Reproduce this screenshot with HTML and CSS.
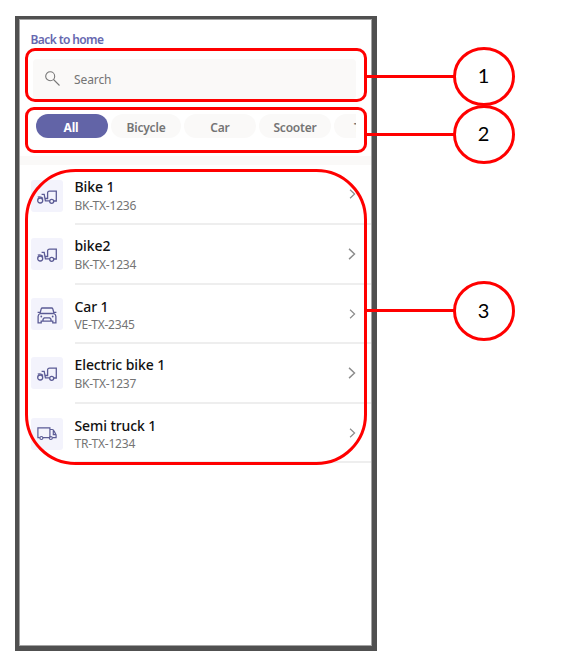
FILE: index.html
```html
<!DOCTYPE html>
<html lang="en">
<head>
<meta charset="utf-8">
<title>Vehicles</title>
<link rel="stylesheet" href="styles.css">
</head>
<body>
<svg class="defs" aria-hidden="true">
  <symbol id="scooter" viewBox="0 0 20 14"><g fill="none" stroke="#5b5b95" stroke-width="1.3"><circle cx="3.2" cy="10.5" r="2.5"/><path d="M.8 7.2Q3.8 6 6 8.5M4.600 4.400h2.600l1.200 6.500h4.200M7.500 8.500h3.100V3.100q0-2 2-2h6.700v9.900h-2.300"/><circle cx="14.700" cy="11.300" r="2"/></g></symbol>
  <symbol id="car" viewBox="0 0 20 17"><g fill="none" stroke="#5b5b95" stroke-width="1.3"><path d="M3 6.300l1.200-4.400q.3-.9 1.200-.9h9.200q.9 0 1.200.9L17 6.300M.6 5.300h2.200M17.200 5.300h2.200M3 6.500h14q1.900 1 1.900 3v6.300h-3.100v-1.600H4.200v1.600H1.100V9.500q0-2 1.900-3zM6 14v-1.700l1.200-1.500h5.600l1.200 1.500V14"/></g><g fill="#5b5b95"><circle cx="4.300" cy="9.500" r=".9"/><circle cx="15.700" cy="9.500" r=".9"/></g></symbol>
  <symbol id="truck" viewBox="0 0 20 14"><g fill="none" stroke="#5b5b95" stroke-width="1.2"><path d="M2.800 10.700H.9V.8h12v9.900H6M12.900 2.500h2.400q1.200 0 1.800 1.400l2 4v2.800h-3.700M16.300 3v4.700h2.700"/><circle cx="4.400" cy="11" r="1.500"/><circle cx="13.800" cy="11" r="1.500"/></g></symbol>
  <symbol id="chevron" viewBox="0 0 7 11"><path d="M.8.8l5 4.700-5 4.700" fill="none" stroke="#8c8c8c" stroke-width="1.300"/></symbol>
</svg>
<main class="phone">
  <div class="screen">
    <header class="top">
      <a class="back">Back to home</a>
      <div class="search">
        <svg class="glass" viewBox="0 0 15 15" fill="none" stroke="#777" stroke-width="1.1"><circle cx="5.2" cy="5.2" r="4.5"/><path d="M8.5 8.5l6 6"/></svg>
        <span>Search</span>
      </div>
      <nav class="chips">
        <span class="chip active">All</span><span class="chip bicycle">Bicycle</span><span class="chip">Car</span><span class="chip">Scooter</span><span class="chip last">Truck</span>
      </nav>
    </header>
    <div class="band"></div>
    <section class="list">
      <div class="row first"><div class="tile"><svg class="icon"><use href="#scooter"/></svg></div><div class="body"><div class="text"><b>Bike 1</b><span>BK-TX-1236</span></div><svg class="chev small"><use href="#chevron"/></svg></div></div>
      <div class="row"><div class="tile"><svg class="icon"><use href="#scooter"/></svg></div><div class="body"><div class="text"><b>bike2</b><span>BK-TX-1234</span></div><svg class="chev"><use href="#chevron"/></svg></div></div>
      <div class="row short car"><div class="tile"><svg class="icon tall"><use href="#car"/></svg></div><div class="body"><div class="text"><b>Car 1</b><span>VE-TX-2345</span></div><svg class="chev small"><use href="#chevron"/></svg></div></div>
      <div class="row"><div class="tile"><svg class="icon"><use href="#scooter"/></svg></div><div class="body"><div class="text"><b>Electric bike 1</b><span>BK-TX-1237</span></div><svg class="chev"><use href="#chevron"/></svg></div></div>
      <div class="row short semi"><div class="tile"><svg class="icon flat"><use href="#truck"/></svg></div><div class="body"><div class="text"><b>Semi truck 1</b><span>TR-TX-1234</span></div><svg class="chev small"><use href="#chevron"/></svg></div></div>
    </section>
  </div>
</main>
<svg class="notes" viewBox="0 0 563 660">
  <g fill="none" stroke="#f00" stroke-width="3">
    <rect x="26.5" y="49.5" width="339" height="51" rx="8.5"/>
    <rect x="26.5" y="108.5" width="339" height="43" rx="7.5"/>
    <rect x="26.5" y="170.5" width="339" height="293" rx="49"/>
    <path d="M366 76.5h88M366 134.5h88M366 310.5h88"/>
    <ellipse cx="484" cy="76.5" rx="29.5" ry="28"/>
    <ellipse cx="484" cy="134.5" rx="29.5" ry="28"/>
    <ellipse cx="484" cy="311" rx="29.5" ry="28.5"/>
  </g>
  <g class="nums" text-anchor="middle"><text x="483.5" y="83">1</text><text x="483.5" y="141">2</text><text x="483.5" y="318">3</text></g>
</svg>
</body>
</html>
```
FILE: styles.css
```css
* { box-sizing: border-box; }
body { margin: 0; padding: 16px 0 0 15px; background: #fff; height: 660px; overflow: hidden; font-family: "Noto Sans", "Open Sans", sans-serif; }
.defs { position: absolute; width: 0; height: 0; }
.phone { width: 362px; height: 635px; border: solid #505050; border-width: 3px 5px 5px 4px; }
.screen { height: 627px; border: 1px solid #a3a3a3; background: #fff; }
.top { height: 136px; padding: 11px 0 0 11px; }
.back { display: block; height: 18px; line-height: 18px; margin-left: -0.5px; font-size: 12px; font-weight: 600; letter-spacing: -0.6px; color: #6667af; }
.search { display: flex; align-items: center; width: 323px; height: 40px; margin: 10px 0 0 2px; padding-left: 12px; border-radius: 4px; background: #faf9f8; color: #747474; font-size: 12px; letter-spacing: -0.1px; }
.glass { width: 15px; height: 15px; margin: -2px 14px 0 0; }
.chips { display: flex; gap: 3px; width: 320px; margin: 15px 0 0 5px; overflow: hidden; }
.chip { flex: none; width: 72px; height: 24px; line-height: 27px; border-radius: 12px; background: #faf9f8; color: #747474; font-size: 12px; font-weight: 600; letter-spacing: -0.2px; text-align: center; }
.bicycle { width: 70px; }
.active { background: #6264a7; color: #fff; font-weight: 700; padding-right: 2px; }
.last { text-align: left; padding-left: 20px; }
.band { height: 9px; background: #faf9f8; }
.row { display: flex; height: 60px; padding: 0 0 0 11px; }
.short { height: 59px; }
.tile { display: flex; align-items: center; justify-content: center; width: 32px; height: 32px; margin: 13px 12px 0 0; border-radius: 3px; background: #f3f3fc; }
.first .tile { margin-top: 15px; }
.semi .tile { margin-top: 14px; }
.icon { width: 20px; height: 14px; margin-top: 2px; }
.tall { height: 17px; margin-top: 3px; }
.flat { margin-top: 0; }
.body { display: flex; flex: 1; justify-content: space-between; padding: 11px 15px 0 0; border-bottom: 2px solid #eee; }
.first .body, .car .body, .semi .body { padding-top: 12px; }
.text { display: flex; flex-direction: column; margin-left: -0.5px; }
.text b { height: 20px; line-height: 20px; font-size: 14px; font-weight: 500; letter-spacing: -0.1px; color: #111; white-space: nowrap; }
.text span { height: 18px; line-height: 18px; font-size: 12px; letter-spacing: -0.2px; color: #747474; }
.car .text span, .semi .text span { margin-top: -1px; }
.chev { width: 8px; height: 12px; margin-top: 12px; }
.small { width: 7px; height: 10px; }
.nums { font: 20px Lato, sans-serif; fill: #000; }
.notes { position: absolute; left: 0; top: 0; width: 563px; height: 660px; }
```
